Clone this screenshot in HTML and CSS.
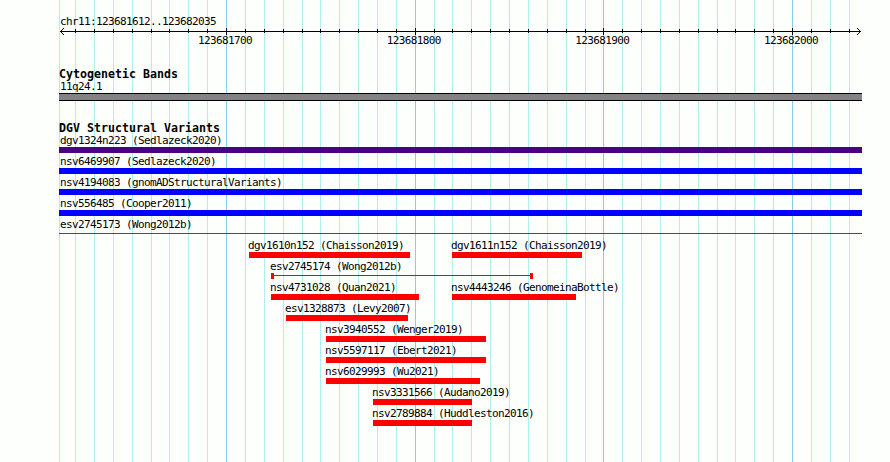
FILE: index.html
```html
<!DOCTYPE html>
<html lang="en">
<head>
<meta charset="utf-8">
<title>chr11:123681612..123682035</title>
<link rel="stylesheet" href="styles.css">
</head>
<body>
<main class="browser">
  <svg class="grid" width="890" height="462" aria-hidden="true">
    <path class="minor" d="M59.5 0v462M75.5 0v462M94.5 0v462M113.5 0v462M132.5 0v462M151.5 0v462M169.5 0v462M188.5 0v462M207.5 0v462M245.5 0v462M264.5 0v462M283.5 0v462M302.5 0v462M320.5 0v462M339.5 0v462M358.5 0v462M377.5 0v462M396.5 0v462M434.5 0v462M452.5 0v462M471.5 0v462M490.5 0v462M509.5 0v462M528.5 0v462M547.5 0v462M566.5 0v462M585.5 0v462M622.5 0v462M641.5 0v462M660.5 0v462M679.5 0v462M698.5 0v462M717.5 0v462M735.5 0v462M754.5 0v462M773.5 0v462M811.5 0v462M830.5 0v462M849.5 0v462"/>
    <path class="major" d="M226.5 0v462M415.5 0v462M603.5 0v462M792.5 0v462"/>
  </svg>
  <header class="ruler">
    <div class="region">chr11:123681612..123682035</div>
    <svg class="axis" width="803" height="9" viewBox="59 27 803 9" aria-hidden="true">
      <path d="M60 31.5H861M64 28L60.5 31.5L64 35M857 28L860.5 31.5L857 35"/>
      <path class="ticks" d="M75.5 29v4M94.5 29v4M113.5 29v4M132.5 29v4M151.5 29v4M169.5 29v4M188.5 29v4M207.5 29v4M226.5 28v7M245.5 29v4M264.5 29v4M283.5 29v4M302.5 29v4M320.5 29v4M339.5 29v4M358.5 29v4M377.5 29v4M396.5 29v4M415.5 28v7M434.5 29v4M452.5 29v4M471.5 29v4M490.5 29v4M509.5 29v4M528.5 29v4M547.5 29v4M566.5 29v4M585.5 29v4M603.5 28v7M622.5 29v4M641.5 29v4M660.5 29v4M679.5 29v4M698.5 29v4M717.5 29v4M735.5 29v4M754.5 29v4M773.5 29v4M792.5 28v7M811.5 29v4M830.5 29v4M849.5 29v4"/>
    </svg>
    <div class="scale"><span>123681700</span><span>123681800</span><span>123681900</span><span>123682000</span></div>
  </header>
  <section class="track cytogenetic">
    <h2>Cytogenetic Bands</h2>
    <div class="label">11q24.1</div>
    <div class="band"></div>
  </section>
  <section class="track variants">
    <h2>DGV Structural Variants</h2>
    <div class="row full"><div class="label">dgv1324n223 (Sedlazeck2020)</div><div class="bar complex"></div></div>
    <div class="row full"><div class="label">nsv6469907 (Sedlazeck2020)</div><div class="bar gain"></div></div>
    <div class="row full"><div class="label">nsv4194083 (gnomADStructuralVariants)</div><div class="bar gain"></div></div>
    <div class="row full"><div class="label">nsv556485 (Cooper2011)</div><div class="bar gain"></div></div>
    <div class="row full"><div class="label">esv2745173 (Wong2012b)</div><div class="bar span"></div></div>
    <div class="row">
      <div class="variant" style="margin-left:190px;width:161px"><div class="label">dgv1610n152 (Chaisson2019)</div><div class="bar"></div></div>
      <div class="variant" style="margin-left:42px;width:130px"><div class="label">dgv1611n152 (Chaisson2019)</div><div class="bar"></div></div>
    </div>
    <div class="row"><div class="variant" style="margin-left:212px;width:262px"><div class="label">esv2745174 (Wong2012b)</div><div class="bar span capped"></div></div></div>
    <div class="row">
      <div class="variant" style="margin-left:212px;width:148px"><div class="label">nsv4731028 (Quan2021)</div><div class="bar"></div></div>
      <div class="variant" style="margin-left:33px;width:124px"><div class="label">nsv4443246 (GenomeinaBottle)</div><div class="bar"></div></div>
    </div>
    <div class="row"><div class="variant" style="margin-left:227px;width:122px"><div class="label">esv1328873 (Levy2007)</div><div class="bar"></div></div></div>
    <div class="row"><div class="variant" style="margin-left:267px;width:160px"><div class="label">nsv3940552 (Wenger2019)</div><div class="bar"></div></div></div>
    <div class="row"><div class="variant" style="margin-left:267px;width:160px"><div class="label">nsv5597117 (Ebert2021)</div><div class="bar"></div></div></div>
    <div class="row"><div class="variant" style="margin-left:267px;width:154px"><div class="label">nsv6029993 (Wu2021)</div><div class="bar"></div></div></div>
    <div class="row"><div class="variant" style="margin-left:314px;width:99px"><div class="label">nsv3331566 (Audano2019)</div><div class="bar"></div></div></div>
    <div class="row"><div class="variant" style="margin-left:314px;width:99px"><div class="label">nsv2789884 (Huddleston2016)</div><div class="bar"></div></div></div>
  </section>
</main>
</body>
</html>
```
FILE: styles.css
```css
* { box-sizing: border-box; }

body {
  margin: 0;
  background: #fdfffc;
  color: #000;
  font: 11px/13px "DejaVu Sans Mono", monospace;
  letter-spacing: -0.622px;
  white-space: nowrap;
}

.browser {
  position: relative;
  width: 890px;
  height: 462px;
  padding: 15px 28px 0 59px;
  overflow: hidden;
}

.grid { position: absolute; left: 0; top: 0; }
.grid path { fill: none; shape-rendering: crispEdges; }
.grid .minor { stroke: #afeeee; }
.grid .major { stroke: #87ceeb; }

.ruler, .track { position: relative; }
.ruler { height: 53px; }
.region { height: 12px; padding-left: 1px; }
.axis { display: block; }
.axis path { fill: none; stroke: #000; }
.axis .ticks { shape-rendering: crispEdges; }

.scale {
  display: flex;
  gap: 134.67px;
  margin-top: -2px;
  padding-left: 139px;
}
.scale span { width: 54px; }

h2 {
  margin: 0;
  height: 12px;
  font-size: 11.6px;
  line-height: 13px;
  font-weight: bold;
  letter-spacing: 0.016px;
}

.label { height: 13px; padding-left: 1px; }

.cytogenetic { height: 54px; }
.band {
  width: 803px;
  height: 8px;
  border: solid #000;
  border-width: 1px 0;
  background: #848284;
}

.row { display: flex; height: 21px; }
.full { display: block; }
.variant { flex: none; }
.variant .label { padding-left: 0; margin-left: -1px; }
.bar { height: 6px; background: #f00; }
.full .bar { width: 803px; }
.full .complex { background: #4b0082; }
.full .gain { background: #00f; }
.span { background: linear-gradient(#f00, #f00) 0 2px / 100% 1px no-repeat; }
.capped {
  border: solid #f00;
  border-width: 0 3px;
}
```
